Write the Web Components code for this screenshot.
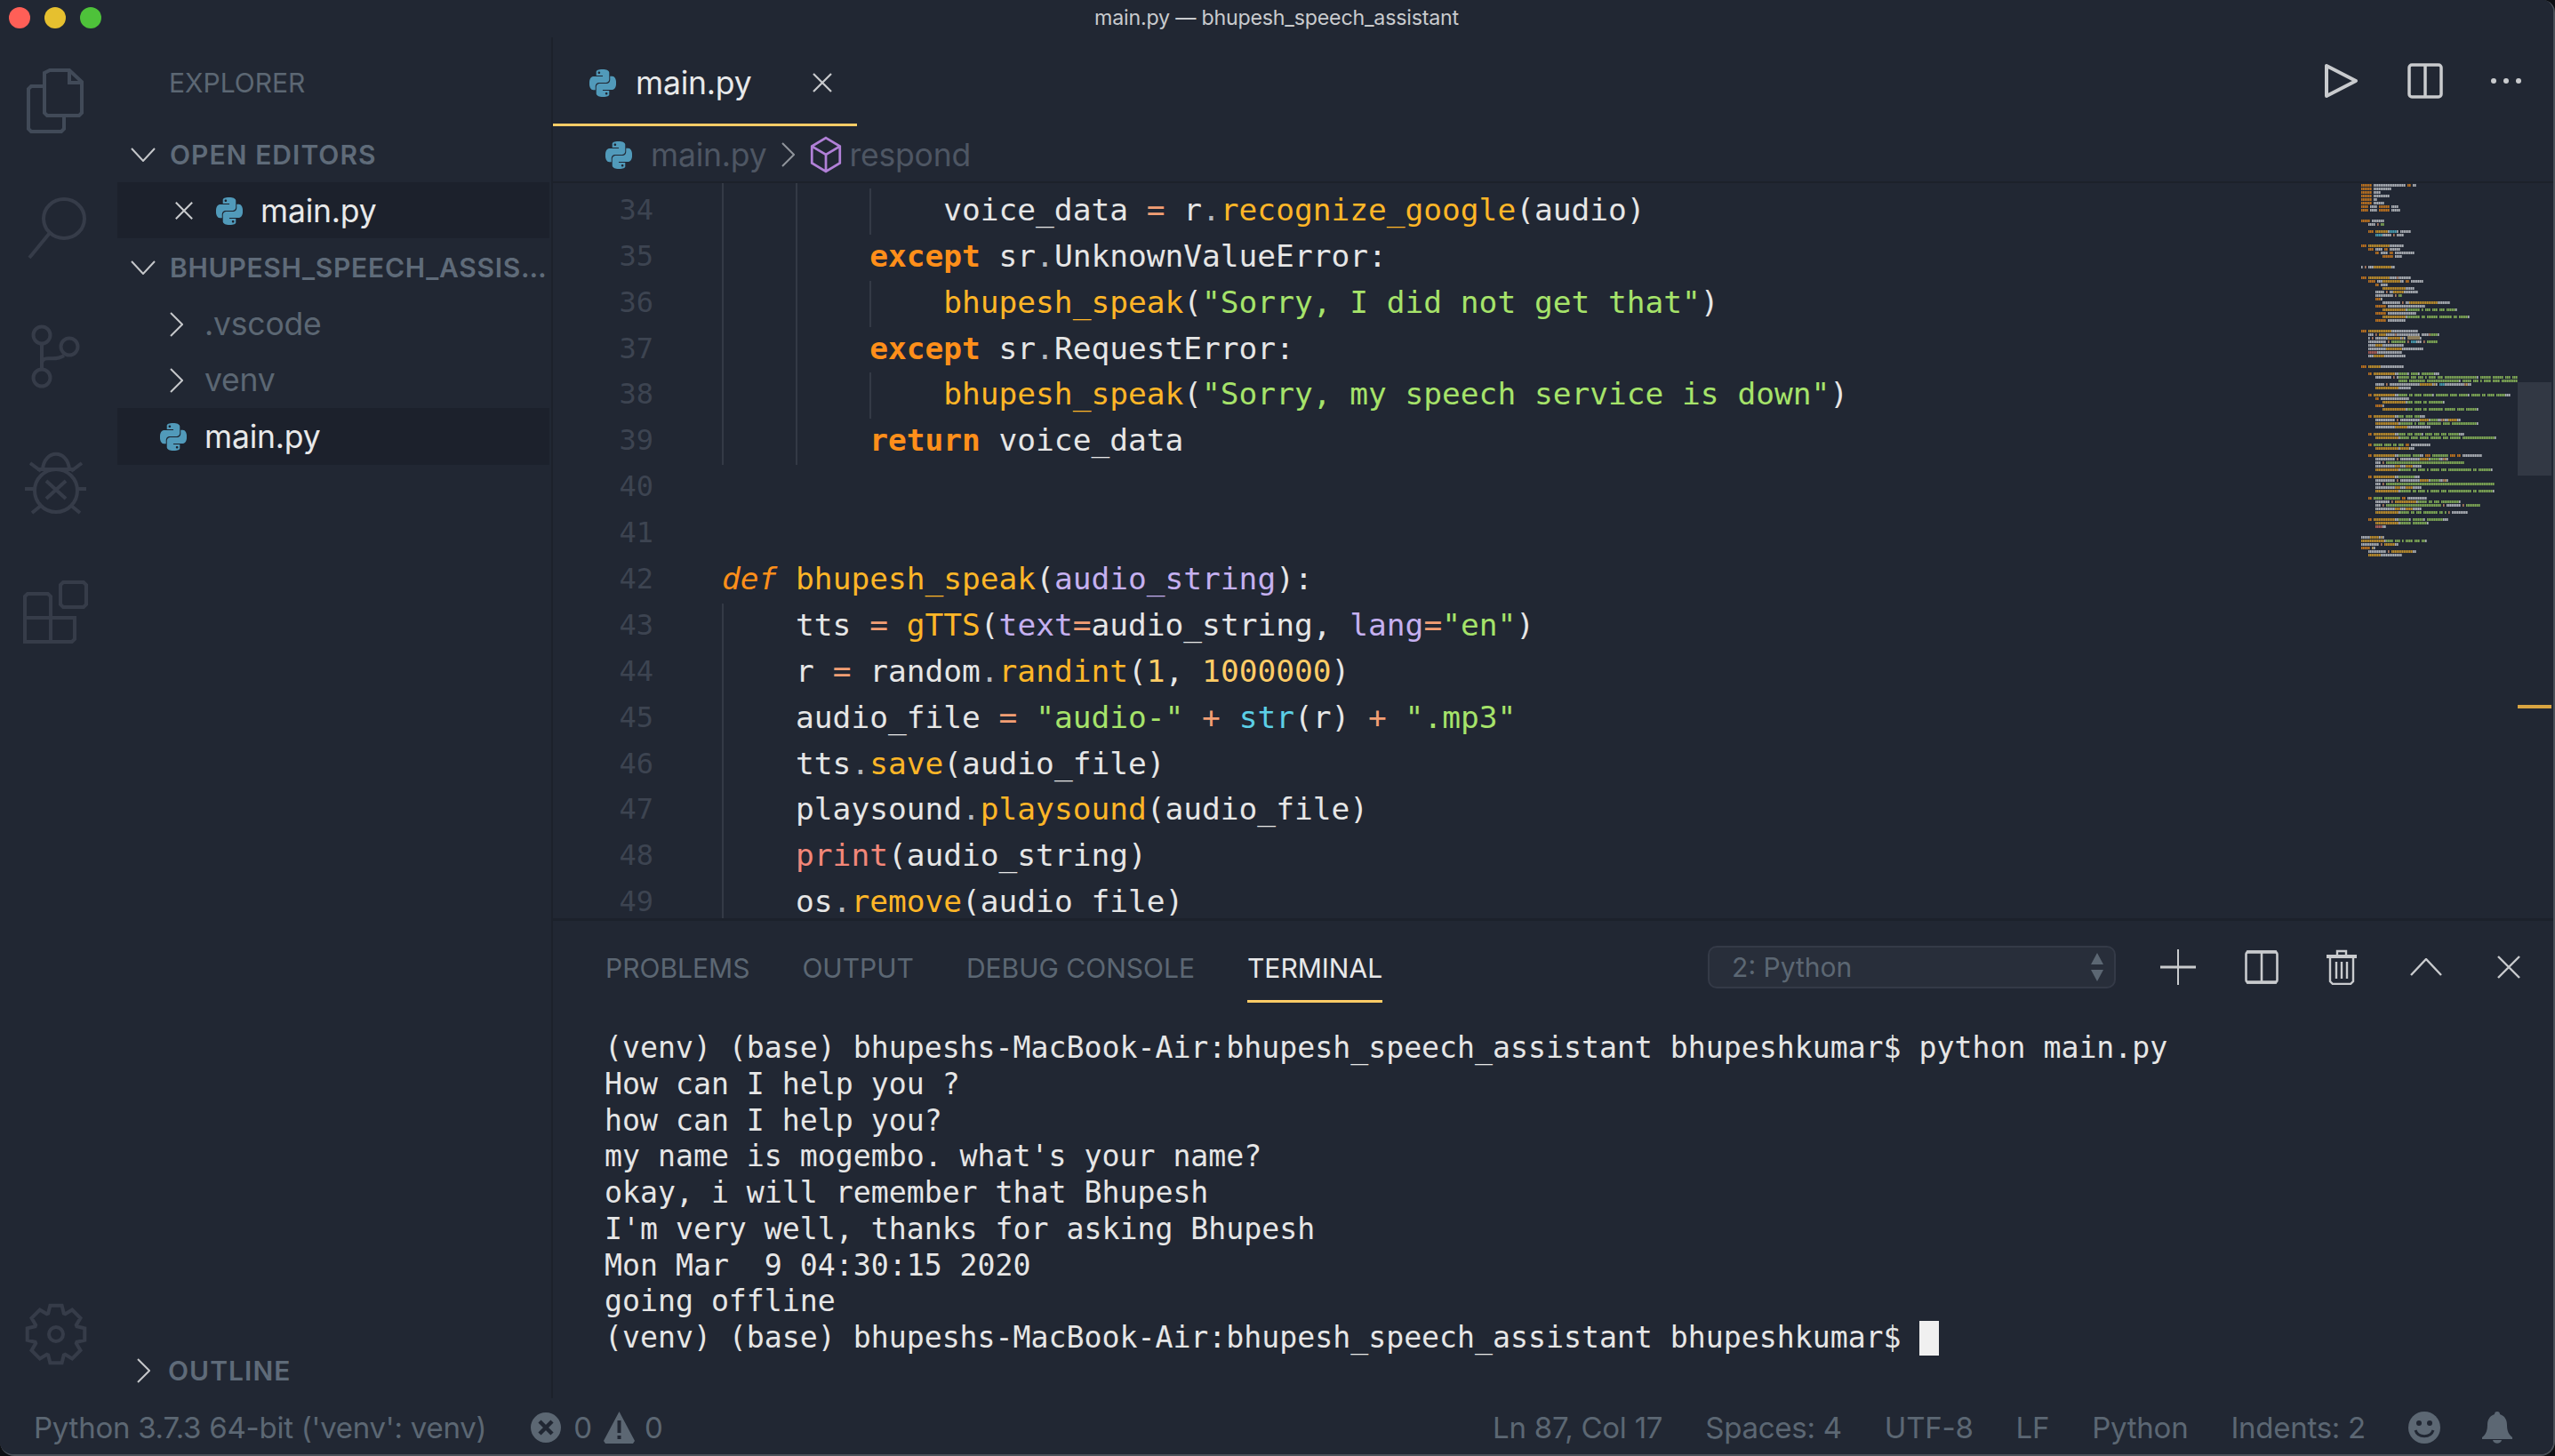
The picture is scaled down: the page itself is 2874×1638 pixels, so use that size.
<!DOCTYPE html>
<html>
<head>
<meta charset="utf-8">
<title>main.py</title>
<style>
    html, body { margin: 0; padding: 0; background: #0d0f13; }
    body { font-family: Inter, "Liberation Sans", sans-serif; }
</style>
</head>
<body>
<vs-window></vs-window>

<script>
const PY_PATH = "M14.25.18l.9.2.73.26.59.3.45.32.34.34.25.34.16.33.1.3.04.26.02.2-.01.13V8.5l-.05.63-.13.55-.21.46-.26.38-.3.31-.33.25-.35.19-.35.14-.33.1-.3.07-.26.04-.21.02H8.77l-.69.05-.59.14-.5.22-.41.27-.33.32-.27.35-.2.36-.15.37-.1.35-.07.32-.04.27-.02.21v3.06H3.17l-.21-.03-.28-.07-.32-.12-.35-.18-.36-.26-.36-.36-.35-.46-.32-.59-.28-.73-.21-.88-.14-1.05-.05-1.23.06-1.22.16-1.04.24-.87.32-.71.36-.57.4-.44.42-.33.42-.24.4-.16.36-.1.32-.05.24-.01h.16l.06.01h8.16v-.83H6.18l-.01-2.75-.02-.37.05-.34.11-.31.17-.28.25-.26.31-.23.38-.2.44-.18.51-.15.58-.12.64-.1.71-.06.77-.04.84-.02 1.27.05zm-6.3 1.98l-.23.33-.08.41.08.41.23.34.33.22.41.09.41-.09.33-.22.23-.34.08-.41-.08-.41-.23-.33-.33-.22-.41-.09-.41.09zm13.09 3.95l.28.06.32.12.35.18.36.27.36.35.35.47.32.59.28.73.21.88.14 1.04.05 1.23-.06 1.23-.16 1.04-.24.86-.32.71-.36.57-.4.45-.42.33-.42.24-.4.16-.36.09-.32.05-.24.02-.16-.01h-8.22v.82h5.84l.01 2.76.02.36-.05.34-.11.31-.17.29-.25.25-.31.24-.38.2-.44.17-.51.15-.58.13-.64.09-.71.07-.77.04-.84.01-1.27-.04-1.07-.14-.9-.2-.73-.25-.59-.3-.45-.33-.34-.34-.25-.34-.16-.33-.1-.3-.04-.25-.02-.2.01-.13v-5.34l.05-.64.13-.54.21-.46.26-.38.3-.32.33-.24.35-.2.35-.14.33-.1.3-.06.26-.04.21-.02.13-.01h5.84l.69-.05.59-.14.5-.21.41-.28.33-.32.27-.35.2-.36.15-.36.1-.35.07-.32.04-.28.02-.21V6.07h2.09l.14.01zm-6.47 14.25l-.23.33-.08.41.08.41.23.33.33.23.41.08.41-.08.33-.23.23-.33.08-.41-.08-.41-.23-.33-.33-.23-.41-.08-.41.08z";

const SANS = `Inter, "Liberation Sans", sans-serif`;
const MONO = `"DejaVu Sans Mono", "Liberation Mono", monospace`;

const X_ICON = (size) => `<svg width="${size}" height="${size}" viewBox="0 0 24 24" fill="none" stroke="#c9cbce" stroke-width="2.2"><path d="M2 2 22 22M22 2 2 22"/></svg>`;
const CHEVRON_DOWN = `<svg width="28" height="16" viewBox="0 0 28 16" fill="none" stroke="#c5c7ca" stroke-width="2"><path d="M1 1 14 15 27 1"/></svg>`;
const CHEVRON_RIGHT = `<svg width="15" height="28" viewBox="0 0 15 28" fill="none" stroke="#c5c7ca" stroke-width="2"><path d="M1 1 14 14 1 27"/></svg>`;

class PyIcon extends HTMLElement {
    constructor() {
        super();
        this.attachShadow({mode: "open"});
        this.shadowRoot.innerHTML = `<style>
            :host { display: inline-flex; flex: none; width: 30px; height: 31px; }
        </style><svg width="30" height="31" viewBox="0 0 24 24" preserveAspectRatio="none"><path fill="#519aba" d="${PY_PATH}"/></svg>`;
    }
}

class TitleBar extends HTMLElement {
    constructor() {
        super();
        this.attachShadow({mode: "open"});
        this.shadowRoot.innerHTML = `<style>
            :host { display: flex; align-items: center; justify-content: center; position: relative; height: 42px; background: #212733; }
            .lights { position: absolute; left: 10px; top: 8px; display: flex; gap: 16px; }
            .lights i { width: 24px; height: 24px; border-radius: 50%; }
            .title { font: 400 23.2px ${SANS}; color: #c9cbce; margin-top: -2px; letter-spacing: -.2px; }
        </style>
        <div class="lights">
            <i style="background:#ff5f57"></i><i style="background:#e6c02f"></i><i style="background:#4ec23a"></i>
        </div>
        <div class="title">main.py — bhupesh_speech_assistant</div>`;
    }
}

class ActivityBar extends HTMLElement {
    constructor() {
        super();
        this.attachShadow({mode: "open"});
        let gear = "";
        for(let i = 0; i < 8; i++) {
            let a = i * Math.PI / 4 - Math.PI / 2;
            let p = (r, d) => `${(63 + r * Math.cos(a + d)).toFixed(1)} ${(1501 + r * Math.sin(a + d)).toFixed(1)}`;
            gear += `${i ? "L" : "M"}${p(25, -.36)}L${p(33, -.2)}L${p(33, .2)}L${p(25, .36)}`;
        }
        let icon = (y, body) => `<svg width="132" height="145" viewBox="0 ${y} 132 145" fill="none" stroke="#363c49" stroke-width="4">${body}</svg>`;
        this.shadowRoot.innerHTML = `<style>
            :host { display: flex; flex-direction: column; flex: none; width: 132px; background: #212733; }
            .grow { flex: 1; }
            svg { display: block; }
        </style>
        ${icon(42, `<g stroke="#414a58"><path d="M56 79H78L92 92V127L89 130H53L50 127V82Z"/><path d="M78 81V93H91"/><path d="M50 97H35L32 100V145L35 148H69L72 145V130"/></g>`)}
        ${icon(187, `<ellipse cx="72" cy="246" rx="23" ry="22"/><path d="M56 262 33 290"/>`)}
        ${icon(332, `<circle cx="47" cy="377" r="9.5"/><circle cx="78" cy="390" r="9.5"/><circle cx="47" cy="425" r="9.5"/><path d="M47 387V415M47 408C50 398 60 408 72 400"/>`)}
        ${icon(477, `<circle cx="63" cy="552" r="24"/><path d="M48 528C50 505 76 505 78 528M42 528H84M34 521 46 530M92 521 80 530M28 550H39M87 550H97M36 577 47 568M90 577 79 568M52 541 74 561M74 541 52 561"/>`)}
        ${icon(622, `<path d="M28 671 31 668H54L57 671V722H28ZM28 695H84V719L81 722H57"/><path d="M71 655H94L97 658V680L94 683H71L68 680V658Z"/>`)}
        <div class="grow"></div>
        ${icon(1428, `<path d="${gear}Z"/><circle cx="63" cy="1501" r="8"/>`)}`;
    }
}

class TreeRow extends HTMLElement {
    constructor() {
        super();
        this.attachShadow({mode: "open"});
        this.shadowRoot.innerHTML = `<style>
            :host { display: flex; align-items: center; box-sizing: border-box; height: 63.6px; padding-top: 2px; padding-left: var(--pad, 0px); overflow: hidden; font: 400 35.5px ${SANS}; letter-spacing: -.2px; color: #5c6773; }
            :host([selected]) { background: #1c212c; color: #e8e9ea; margin-right: 2px; }
            :host([head]) { font-size: 30px; font-weight: 600; letter-spacing: var(--track, 1.05px); color: #5f6b79; }
            .ic { flex: none; display: flex; align-items: center; justify-content: center; width: var(--ic, 30px); margin-right: var(--gap, 20px); }
            .txt { white-space: nowrap; overflow: hidden; text-overflow: ellipsis; line-height: 1.4; }
        </style><div class="ic"><slot name="ic"></slot></div><div class="txt"><slot></slot></div>`;
    }
}

class SideBar extends HTMLElement {
    constructor() {
        super();
        this.attachShadow({mode: "open"});
        this.shadowRoot.innerHTML = `<style>
            :host { display: flex; flex-direction: column; flex: none; box-sizing: border-box; width: 490px; background: #212733; border-right: 2px solid #1c212b; }
            .hd { height: 99px; display: flex; align-items: center; padding-left: 58px; font: 400 30px ${SANS}; color: #5c6773; box-sizing: border-box; padding-top: 3px; }
            .grow { flex: 1; }
            tree-row[head] { --pad: 15px; --ic: 28px; --gap: 16px; }
            .ind { --pad: 59px; --ic: 15px; --gap: 24px; }
            .open { --pad: 64px; --ic: 22px; --gap: 25px; }
            span[slot] { display: inline-flex; align-items: center; }
        </style>
        <div class="hd">EXPLORER</div>
        <tree-row head><span slot="ic">${CHEVRON_DOWN}</span>OPEN EDITORS</tree-row>
        <tree-row selected class="open"><span slot="ic">${X_ICON(22)}</span><span style="display:flex;align-items:center;gap:20px"><py-icon></py-icon>main.py</span></tree-row>
        <tree-row head style="--track:.72px"><span slot="ic">${CHEVRON_DOWN}</span>BHUPESH_SPEECH_ASSISTANT</tree-row>
        <tree-row class="ind"><span slot="ic">${CHEVRON_RIGHT}</span>.vscode</tree-row>
        <tree-row class="ind"><span slot="ic">${CHEVRON_RIGHT}</span>venv</tree-row>
        <tree-row selected style="--pad:48px"><py-icon slot="ic"></py-icon>main.py</tree-row>
        <div class="grow"></div>
        <tree-row head style="--pad:22px;--ic:15px;--gap:20px;height:64px"><span slot="ic">${CHEVRON_RIGHT}</span>OUTLINE</tree-row>`;
    }
}

class EditorHeader extends HTMLElement {
    constructor() {
        super();
        this.attachShadow({mode: "open"});
        this.shadowRoot.innerHTML = `<style>
            :host { display: block; flex: none; background: #212733; }
            .tabs { display: flex; height: 100px; box-sizing: border-box; }
            .tab { display: flex; align-items: center; box-sizing: border-box; width: 342px; padding: 5px 0 0 41px; border-bottom: 3px solid #ffcc66; font: 400 35.5px ${SANS}; letter-spacing: -.2px; color: #e8e9ea; }
            .tab py-icon { margin-right: 22px; }
            .tab svg { margin-left: auto; margin-right: 27px; }
            .actions { margin-left: auto; display: flex; align-items: center; height: 100px; box-sizing: border-box; padding: 0 35px 2px 0; }
            .actions svg { display: block; }
            .crumbs { display: flex; align-items: center; box-sizing: border-box; height: 64px; padding: 2px 0 0 59px; border-bottom: 2px solid #1c212b; font: 400 35.5px ${SANS}; letter-spacing: -.2px; color: #4e5663; }
            .crumbs py-icon { margin-right: 21px; }
            .crumbs .sep { margin: 0 17px 0 17px; display: flex; }
            .crumbs .cube { margin-right: 8px; display: flex; }
        </style>
        <div class="tabs">
            <div class="tab"><py-icon></py-icon>main.py${X_ICON(24)}</div>
            <div class="actions">
                <svg width="40" height="40" viewBox="0 0 40 40" fill="none" stroke="#c9cbce" stroke-width="4" stroke-linejoin="round" style="margin-right:55px"><path d="M4 3V37L37 20Z"/></svg>
                <svg width="40" height="40" viewBox="0 0 40 40" fill="none" stroke="#c9cbce" stroke-width="3.5" style="margin-right:53px"><rect x="2" y="2" width="36" height="36" rx="3"/><path d="M20 2V38"/></svg>
                <svg width="36" height="8" viewBox="0 0 36 8" fill="#c9cbce"><circle cx="4" cy="4" r="3"/><circle cx="18" cy="4" r="3"/><circle cx="32" cy="4" r="3"/></svg>
            </div>
        </div>
        <div class="crumbs">
            <py-icon></py-icon>main.py
            <span class="sep"><svg width="15" height="28" viewBox="0 0 15 28" fill="none" stroke="#8f949b" stroke-width="2"><path d="M1 1 14 14 1 27"/></svg></span>
            <span class="cube"><svg width="36" height="42" viewBox="0 0 34 40" fill="none" stroke="#b180d7" stroke-width="2.6"><path d="M17 2 32 11V29L17 38 2 29V11ZM2 11 17 20 32 11M17 20V38"/></svg></span>respond
        </div>`;
    }
}

// lines 33-49 of the file, {x:...} marks a coloured token
const CODE_LINES = [
    [33, 2, "{k:try}:"],
    [34, 3, "voice_data {o:=} r{d:.}{f:recognize_google}(audio)"],
    [35, 2, "{K:except} sr{d:.}UnknownValueError:"],
    [36, 3, '{f:bhupesh_speak}({s:"Sorry, I did not get that"})'],
    [37, 2, "{K:except} sr{d:.}RequestError:"],
    [38, 3, '{f:bhupesh_speak}({s:"Sorry, my speech service is down"})'],
    [39, 2, "{K:return} voice_data"],
    [40, 0, ""],
    [41, 0, ""],
    [42, 0, "{D:def} {f:bhupesh_speak}({p:audio_string}):"],
    [43, 1, 'tts {o:=} {f:gTTS}({p:text}{o:=}audio_string, {p:lang}{o:=}{s:"en"})'],
    [44, 1, "r {o:=} random{d:.}{f:randint}({n:1}, {n:1000000})"],
    [45, 1, 'audio_file {o:=} {s:"audio-"} {o:+} {c:str}(r) {o:+} {s:".mp3"}'],
    [46, 1, "tts{d:.}{f:save}(audio_file)"],
    [47, 1, "playsound{d:.}{f:playsound}(audio_file)"],
    [48, 1, "{r:print}(audio_string)"],
    [49, 1, "os{d:.}{f:remove}(audio_file)"]
];

class CodeView extends HTMLElement {
    constructor() {
        super();
        this.attachShadow({mode: "open"});
        let rows = CODE_LINES.map(([num, indent, text]) => {
            let html = text.replace(/\{(\w):([^}]*)\}/g, (m, cls, body) => `<span class="${cls}">${body}</span>`);
            let guides = `<span class="g">    </span>`.repeat(indent);
            return `<div class="row"><div class="num">${num}</div><div class="code">${guides}${html}</div></div>`;
        }).join("");
        this.shadowRoot.innerHTML = `<style>
            :host { display: block; flex: 1; min-height: 0; overflow: hidden; position: relative; background: #212733; font: 400 34.5px ${MONO}; color: #e6e6e6; }
            .scroll { margin-top: -46px; }
            .row { display: flex; height: 51.9px; line-height: 48px; white-space: pre; }
            .num { flex: none; width: 113px; padding-right: 77px; text-align: right; color: #3d4451; font-size: 32px; }
            .g { display: inline-block; width: 4ch; height: 51.9px; vertical-align: top; box-shadow: inset 2px 0 #343a46; }
            .k, .K, .D { color: #ff8f1a; }
            .K { font-weight: 700; }
            .D { font-style: italic; }
            .f { color: #ffb627; }
            .s { color: #a6e36a; }
            .p { color: #c5b0f0; }
            .o { color: #f29e74; }
            .d { color: #b5b8bd; }
            .n { color: #ffcc66; }
            .c { color: #5ccfe6; }
            .r { color: #f28779; }
        </style><div class="scroll">${rows}</div><mini-map></mini-map>`;
    }
}

const MINI_SOURCE = `import speech_recognition as sr
import webbrowser
import time
import playsound
import os
import random
from gtts import gTTS
from time import ctime


class person:
    name = ''

    def setName(self, name):
        self.name = name


def there_exists(terms):
    for term in terms:
        if term in voice_data:
            return True


r = sr.Recognizer()


def record_audio(ask=False):
    with sr.Microphone() as source:
        if ask:
            bhupesh_speak(ask)
        audio = r.listen(source)
        voice_data = ''
        try:
            voice_data = r.recognize_google(audio)
        except sr.UnknownValueError:
            bhupesh_speak("Sorry, I did not get that")
        except sr.RequestError:
            bhupesh_speak("Sorry, my speech service is down")
        return voice_data


def bhupesh_speak(audio_string):
    tts = gTTS(text=audio_string, lang="en")
    r = random.randint(1, 1000000)
    audio_file = "audio-" + str(r) + ".mp3"
    tts.save(audio_file)
    playsound.playsound(audio_file)
    print(audio_string)
    os.remove(audio_file)


def respond(voice_data):

    if there_exists(["hey", "hi", "hello"]):
        greetings = [f"hey, how can I help you {person_obj.name}", f"hey, what's up? {person_obj.name}",
                     f"I'm listening {person_obj.name}", f"how can I help you? {person_obj.name}", f"hello {person_obj.name}"]
        greet = greetings[random.randint(0, len(greetings)-1)]
        bhupesh_speak(greet)

    if there_exists(["what is your name", "what's your name", "tell me your name"]):
        if person_obj.name:
            bhupesh_speak("my name is mogembo")
        else:
            bhupesh_speak("my name is mogembo. what's your name?")

    if there_exists(["my name is"]):
        person_name = voice_data.split("is")[-1].strip()
        bhupesh_speak(f"okay, i will remember that {person_name}")
        person_obj.setName(person_name)

    if there_exists(["how are you", "how are you doing"]):
        bhupesh_speak(f"I'm very well, thanks for asking {person_obj.name}")

    if "what time is it" in voice_data:
        bhupesh_speak(ctime())

    if there_exists(["search for"]) and 'youtube' not in voice_data:
        search_term = voice_data.split("for")[-1]
        url = f"https://google.com/search?q={search_term}"
        webbrowser.get().open(url)
        bhupesh_speak(f"Here is what I found for {search_term} on google")

    if there_exists(["youtube"]):
        search_term = voice_data.split("for")[-1]
        url = f"https://www.youtube.com/results?search_query={search_term}"
        webbrowser.get().open(url)
        bhupesh_speak(f"Here is what I found for {search_term} on youtube")

    if "find location" in voice_data:
        location = record_audio("What is the location?")
        url = "https://google.nl/maps/place/" + location + "/&amp;"
        webbrowser.get().open(url)
        bhupesh_speak("Here is the location of " + location)

    if there_exists(["exit", "quit", "goodbye"]):
        bhupesh_speak("going offline")
        exit()


time.sleep(1)
bhupesh_speak("How can I help you ?")
person_obj = person()
while 1:
    voice_data = record_audio()
    respond(voice_data)`;

const MINI_TOKENS = /(f?"[^"]*"|'[^']*')|\b(import|from|as|def|class|if|for|in|else|try|except|return|with|while|and|not)\b|\b(self|str|len)\b|\b(print|exit)\b|([A-Za-z_]\w*)(?=\()|([=+\-])|(\d+)|(\S)/g;
const MINI_COLOURS = ["#8fbf5c", "#d9801c", "#4fb2c8", "#c96a60", "#d9a02a", "#c98a68", "#d8b060", "#c4c7cc"];

class MiniMap extends HTMLElement {
    constructor() {
        super();
        this.attachShadow({mode: "open"});
        let rects = "";
        MINI_SOURCE.split("\n").forEach((line, index) => {
            for(let m of line.matchAll(MINI_TOKENS)) {
                let group = m.slice(1).findIndex((g) => g !== undefined);
                let colour = MINI_COLOURS[group];
                // plain names that are not calls fall into the last group, a char at a time
                for(let i = 0; i < m[0].length; i++) {
                    if(m[0][i] !== " ") {
                        let col = m.index + i;
                        rects += `<rect x="${col * 2}" y="${index * 4}" width="1.6" height="3" fill="${colour}"/>`;
                    }
                }
            }
        });
        this.shadowRoot.innerHTML = `<style>
            :host { position: absolute; right: 0; top: 0; bottom: 0; width: 216px; }
            svg.map { position: absolute; left: 0; top: 0; filter: blur(.45px); opacity: .85; }
            .hit { position: absolute; left: 52px; top: 172px; width: 14px; height: 4px; background: #8a7c5c; }
            .slider { position: absolute; right: 2px; top: 224px; width: 38px; height: 105px; background: #323844; }
            .mark { position: absolute; right: 2px; top: 587px; width: 38px; height: 4px; background: #d9a441; }
        </style>
        <svg class="map" width="176" height="440" viewBox="0 -1 176 440">${rects}</svg>
        <div class="hit"></div><div class="slider"></div><div class="mark"></div>`;
    }
}

class BottomPanel extends HTMLElement {
    constructor() {
        super();
        this.attachShadow({mode: "open"});
        this.shadowRoot.innerHTML = `<style>
            :host { display: flex; flex-direction: column; flex: none; box-sizing: border-box; height: 540px; border-top: 3px solid #1c212b; background: #212733; }
            .bar { display: flex; align-items: center; box-sizing: border-box; height: 92px; flex: none; padding: 12px 0 0 59px; font: 400 30px ${SANS}; color: #5c6773; }
            .bar .t { display: flex; align-items: center; height: 92px; margin: -12px 59px 0 0; box-sizing: border-box; padding-top: 17px; border-bottom: 3px solid transparent; }
            .bar .on { color: #e8e9ea; border-bottom-color: #ffcc66; margin-right: 0; }
            .drop { display: flex; align-items: center; justify-content: space-between; box-sizing: border-box; width: 459px; height: 48px; margin-left: 366px; padding: 0 12px 0 25px; border: 2px solid #343a47; border-radius: 10px; background: #282e3a; font-size: 30px; color: #5c6773; }
            .tools { display: flex; align-items: center; margin-left: 50px; }
            .tools svg { display: block; }
        </style>
        <div class="bar">
            <div class="t">PROBLEMS</div><div class="t">OUTPUT</div><div class="t">DEBUG CONSOLE</div><div class="t on">TERMINAL</div>
            <div class="drop">2: Python
                <svg width="14" height="32" viewBox="0 0 14 32" fill="#5c6773"><path d="M7 0 14 13H0ZM7 32 0 19H14Z"/></svg>
            </div>
            <div class="tools">
                <svg width="40" height="40" viewBox="0 0 40 40" stroke="#c9cbce" stroke-width="2" style="margin-right:55px"><path d="M20 0V40"/><path d="M0 20H40" stroke-width="3"/></svg>
                <svg width="38" height="38" viewBox="0 0 38 38" fill="none" stroke="#c9cbce" stroke-width="2.6" style="margin-right:54px"><rect x="1.5" y="1.5" width="35" height="35" rx="3"/><path d="M19 1V37"/><path d="M2 2H36M2 36H36" stroke-width="3.5"/></svg>
                <svg width="34" height="40" viewBox="0 0 34 40" fill="none" stroke="#c9cbce" stroke-width="2.4" style="margin-right:60px"><path d="M0 8H34" stroke-width="4"/><path d="M12 6V2H22V6M4 9V36L7 39H27L30 36V9M11 14V33M17 14V33M23 14V33"/></svg>
                <svg width="36" height="20" viewBox="0 0 36 20" fill="none" stroke="#c9cbce" stroke-width="2.4" style="margin-right:62px"><path d="M1 19 18 1 35 19"/></svg>
                <svg width="26" height="26" viewBox="0 0 26 26" fill="none" stroke="#c9cbce" stroke-width="2.4"><path d="M1 1 25 25M25 1 1 25"/></svg>
            </div>
        </div>
        <term-view></term-view>`;
    }
}

const TERM_LINES = [
    "(venv) (base) bhupeshs-MacBook-Air:bhupesh_speech_assistant bhupeshkumar$ python main.py",
    "How can I help you ?",
    "how can I help you?",
    "my name is mogembo. what's your name?",
    "okay, i will remember that Bhupesh",
    "I'm very well, thanks for asking Bhupesh",
    "Mon Mar  9 04:30:15 2020",
    "going offline",
    "(venv) (base) bhupeshs-MacBook-Air:bhupesh_speech_assistant bhupeshkumar$ "
];

class TermView extends HTMLElement {
    constructor() {
        super();
        this.attachShadow({mode: "open"});
        let lines = TERM_LINES.map((t) => `<div class="l">${t}</div>`);
        lines[8] = `<div class="l">${TERM_LINES[8]}<span class="cur"></span></div>`;
        this.shadowRoot.innerHTML = `<style>
            :host { display: block; flex: 1; padding: 31px 0 0 58px; font: 400 33.2px ${MONO}; color: #e6e6e6; }
            .l { height: 40.75px; line-height: 40.75px; white-space: pre; }
            .cur { display: inline-block; width: 22px; height: 39px; vertical-align: top; margin-top: 1px; background: #f0f0f0; }
        </style>${lines.join("")}`;
    }
}

class StatusBar extends HTMLElement {
    constructor() {
        super();
        this.attachShadow({mode: "open"});
        this.shadowRoot.innerHTML = `<style>
            :host { display: flex; align-items: center; box-sizing: border-box; height: 63px; padding: 3px 46px 0 38px; background: #212733; font: 400 33px ${SANS}; letter-spacing: -.25px; color: #5c6773; white-space: nowrap; }
            span { display: inline-flex; align-items: center; }
            svg { display: block; }
            .right { margin-left: auto; display: flex; align-items: center; gap: 48px; }
        </style>
        <span>Python 3.7.3 64-bit ('venv': venv)</span>
        <svg style="margin-left:50px;margin-right:14px" width="34" height="36" viewBox="0 0 34 36"><circle cx="17" cy="18" r="17" fill="#5c6773"/><path d="M10 11 24 25M24 11 10 25" stroke="#212733" stroke-width="4.5"/></svg>
        <span>0</span>
        <svg style="margin-left:13px;margin-right:11px" width="35" height="36" viewBox="0 0 35 36"><path d="M17.5 0 35 33 33 36H2L0 33Z" fill="#5c6773"/><path d="M17.5 10V24M17.5 27V31" stroke="#212733" stroke-width="4"/></svg>
        <span>0</span>
        <div class="right">
            <span>Ln 87, Col 17</span><span>Spaces: 4</span><span>UTF-8</span><span>LF</span><span>Python</span><span>Indents: 2</span>
            <svg width="36" height="36" viewBox="0 0 36 36"><circle cx="18" cy="18" r="18" fill="#5c6773"/><circle cx="12" cy="13" r="3" fill="#212733"/><circle cx="24" cy="13" r="3" fill="#212733"/><path d="M8 21C11 30 25 30 28 21" fill="none" stroke="#212733" stroke-width="3"/></svg>
            <svg style="margin-left:-1px" width="34" height="36" viewBox="0 0 34 36" fill="#5c6773"><path d="M17 0C19 0 20 1 20 3 26 5 28 10 28 15 28 22 30 26 34 29V31H0V29C4 26 6 22 6 15 6 10 8 5 14 3 14 1 15 0 17 0Z"/><path d="M12 32H22C21 37 13 37 12 32Z"/></svg>
        </div>`;
    }
}

class VsWindow extends HTMLElement {
    constructor() {
        super();
        this.attachShadow({mode: "open"});
        this.shadowRoot.innerHTML = `<style>
            :host { display: flex; flex-direction: column; box-sizing: border-box; width: 2874px; height: 1638px; overflow: hidden; background: #212733; border-right: 2px solid #4a5058; border-bottom: 2px solid #4a5058; border-radius: 0 14px 16px 16px; }
            .main { display: flex; flex: 1; min-height: 0; }
            .editor { display: flex; flex-direction: column; flex: 1; min-width: 0; }
        </style>
        <title-bar></title-bar>
        <div class="main">
            <activity-bar></activity-bar>
            <side-bar></side-bar>
            <div class="editor">
                <editor-header></editor-header>
                <code-view></code-view>
                <bottom-panel></bottom-panel>
            </div>
        </div>
        <status-bar></status-bar>`;
    }
}

customElements.define("py-icon", PyIcon);
customElements.define("title-bar", TitleBar);
customElements.define("activity-bar", ActivityBar);
customElements.define("tree-row", TreeRow);
customElements.define("side-bar", SideBar);
customElements.define("editor-header", EditorHeader);
customElements.define("mini-map", MiniMap);
customElements.define("code-view", CodeView);
customElements.define("term-view", TermView);
customElements.define("bottom-panel", BottomPanel);
customElements.define("status-bar", StatusBar);
customElements.define("vs-window", VsWindow);
</script>
</body>
</html>
